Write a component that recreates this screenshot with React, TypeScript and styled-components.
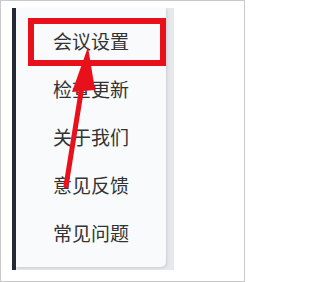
import styled, { createGlobalStyle } from 'styled-components'

const GlobalStyle = createGlobalStyle`
  html, body { margin: 0; padding: 0; background: #ffffff; }
  body { font-family: "Noto Sans CJK SC", "Noto Sans", sans-serif; }
`

const items = ['会议设置', '检查更新', '关于我们', '意见反馈', '常见问题']

export default function App(): JSX.Element {
    return <Frame>
        <GlobalStyle />
        <Backdrop>
            <Menu>
                {items.map((label, index) => (
                    <MenuItem key={index}>{label}</MenuItem>
                ))}
            </Menu>
        </Backdrop>
        <Highlight />
        <Arrow width='245' height='282' viewBox='0 0 245 282'>
            <line x1='66' y1='186' x2='83' y2='80' stroke='#e8101a' strokeWidth='5' strokeLinecap='round' />
            <polygon points='88,47 72,92 95,90' fill='#e8101a' />
        </Arrow>
    </Frame>
}

const Frame = styled.div`
position: relative;
box-sizing: border-box;
width: 245px;
height: 282px;
border: 1px solid #c9c9c9;
background: #ffffff;
padding: 7px 0 0 11px;
overflow: hidden;
`

const Backdrop = styled.div`
display: flex;
width: 158px;
height: 262px;
border-left: 4px solid #262a35;
background: #e6e8ec;
`

const Menu = styled.div`
display: flex;
flex-direction: column;
box-sizing: border-box;
width: 150px;
height: 259px;
padding: 8px 0 0 37px;
background: #f8fafc;
border-bottom-right-radius: 5px;
box-shadow: 1px 1px 3px rgba(0, 0, 0, 0.12);
`

const MenuItem = styled.div`
display: flex;
align-items: center;
height: 48px;
font-size: 19px;
color: #333333;
letter-spacing: 0;
white-space: nowrap;
`

const Highlight = styled.div`
position: absolute;
left: 27px;
top: 17px;
width: 138px;
height: 48px;
box-sizing: border-box;
border: 6px solid #e8101a;
`

const Arrow = styled.svg`
position: absolute;
left: -1px;
top: -1px;
pointer-events: none;
`
